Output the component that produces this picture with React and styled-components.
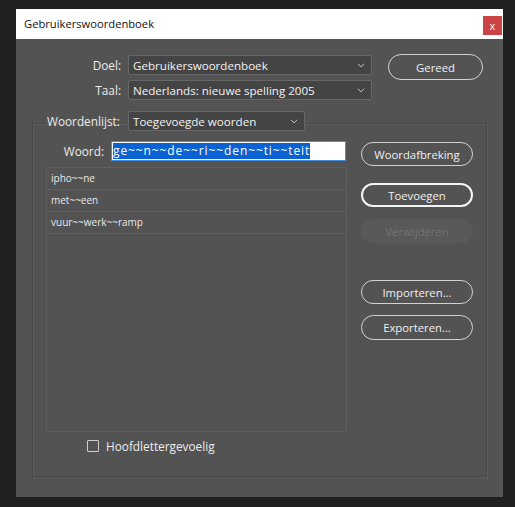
import React from 'react';
import styled, { createGlobalStyle } from 'styled-components';

const GlobalStyle = createGlobalStyle`
  html, body { margin: 0; padding: 0; background: #202020; }
  body { font-family: "Open Sans", "Noto Sans", sans-serif; }
  * { box-sizing: border-box; }
`;

const Page = styled.div`
  width: 515px;
  height: 507px;
  padding: 9px 12px 10px 16px;
`;

const Dialog = styled.div`
  width: 487px;
  height: 488px;
  display: flex;
  flex-direction: column;
  background: #535353;
  box-shadow: inset -3px 0 0 #575757;
`;

const TitleBar = styled.div`
  height: 30px;
  flex: none;
  display: flex;
  align-items: flex-start;
  justify-content: space-between;
  background: #ffffff;
  padding: 0 1px 0 8px;
`;

const Title = styled.span`
  font-size: 11.2px;
  color: #111;
  line-height: 30px;
`;

const CloseButton = styled.button`
  width: 19px;
  height: 19px;
  margin-top: 7px;
  border: none;
  padding: 0;
  background: #cc4346;
  color: #fff;
  font-family: inherit;
  font-size: 11px;
  line-height: 17px;
`;

const Body = styled.div`
  flex: 1;
  display: flex;
  flex-direction: column;
  padding: 0 16px 20px 16px;
`;

const TopSection = styled.div`
  display: flex;
  align-items: flex-start;
  padding-top: 16px;
`;

const FieldGrid = styled.div`
  display: grid;
  grid-template-columns: 89px 244px;
  column-gap: 7px;
  row-gap: 5px;
`;

const Label = styled.label`
  font-size: 11.8px;
  color: #ececec;
  line-height: 20px;
  text-align: ${p => p.$align || 'right'};
  width: ${p => p.$width || 'auto'};
  white-space: nowrap;
  flex: none;
`;

const SelectBox = styled.div`
  height: 20px;
  width: ${p => p.$width || 'auto'};
  display: flex;
  align-items: center;
  justify-content: space-between;
  background: #444444;
  border: 1px solid #676767;
  border-radius: 2px;
  padding: 0 6px 0 4px;
  font-size: 11.6px;
  color: #f2f2f2;
  white-space: nowrap;
`;

const Chevron = () => (
  <svg width="8" height="5" viewBox="0 0 8 5">
    <path d="M0.8 0.8 L4 3.8 L7.2 0.8" fill="none" stroke="#c4c4c4" strokeWidth="1" />
  </svg>
);

const Select = ({ value, width }) => (
  <SelectBox $width={width}>
    <span>{value}</span>
    <Chevron />
  </SelectBox>
);

const PillButton = styled.button`
  width: ${p => p.$width || '112px'};
  height: ${p => p.$height || '24px'};
  margin-top: ${p => p.$mt || '0'};
  margin-left: ${p => p.$ml || '0'};
  border-radius: 13px;
  border: ${p => (p.$default ? '2px solid #f4f4f4' : p.$disabled ? 'none' : '1px solid #d2d2d2')};
  background: ${p => (p.$disabled ? '#595959' : 'transparent')};
  color: ${p => (p.$disabled ? '#737373' : '#f0f0f0')};
  font-family: inherit;
  font-size: 11.3px;
  padding: 0;
  flex: none;
`;

const Group = styled.fieldset`
  flex: 1;
  margin: 11px 0 0 0;
  min-width: 0;
  border: 1px solid #474747;
  box-shadow: inset 1px 1px 0 #5e5e5e, 1px 1px 0 #5e5e5e;
  padding: 6px 13px 0 13px;
  display: flex;
`;

const Legend = styled.legend`
  margin-left: -2px;
  padding: 0 3px 4px 3px;
  display: flex;
  align-items: center;
  gap: 7px;
`;

const GroupContent = styled.div`
  display: flex;
  align-items: flex-start;
  width: 100%;
`;

const LeftColumn = styled.div`
  width: 301px;
  display: flex;
  flex-direction: column;
`;

const WordRow = styled.div`
  display: flex;
  align-items: center;
  gap: 7px;
  height: 20px;
`;

const WordInput = styled.div`
  width: 235px;
  height: 20px;
  background: #ffffff;
  border: 1px solid #4590de;
  padding: 0 1px;
  display: flex;
  align-items: center;
`;

const Selected = styled.span`
  background: #0a62d2;
  color: #ffffff;
  font-size: 12px;
  letter-spacing: 0.9px;
  line-height: 16px;
  white-space: nowrap;
`;

const List = styled.div`
  margin-top: 6px;
  height: 265px;
  border: 1px solid #5f5f5f;
  display: flex;
  flex-direction: column;
`;

const ListRow = styled.div`
  height: 22px;
  border-bottom: 1px solid #5e5e5e;
  padding-left: 4px;
  font-size: 10px;
  color: #e8e8e8;
  line-height: 21px;
`;

const CheckRow = styled.label`
  display: flex;
  align-items: center;
  gap: 7px;
  margin-top: 8px;
  padding-left: 41px;
  font-size: 11.8px;
  color: #ededed;
  height: 12px;
`;

const CheckBox = styled.span`
  width: 12px;
  height: 12px;
  border: 1px solid #cfcfcf;
  border-radius: 1px;
  flex: none;
`;

const RightColumn = styled.div`
  margin-left: 14px;
  padding-top: 1px;
  display: flex;
  flex-direction: column;
`;

const words = ['ipho~~ne', 'met~~een', 'vuur~~werk~~ramp'];

export default function App() {
  return (
    <>
      <GlobalStyle />
      <Page>
        <Dialog>
          <TitleBar>
            <Title>Gebruikerswoordenboek</Title>
            <CloseButton>x</CloseButton>
          </TitleBar>
          <Body>
            <TopSection>
              <FieldGrid>
                <Label>Doel:</Label>
                <Select value="Gebruikerswoordenboek" />
                <Label>Taal:</Label>
                <Select value="Nederlands: nieuwe spelling 2005" />
              </FieldGrid>
              <PillButton $width="95px" $height="26px" $mt="-1px" $ml="16px">
                Gereed
              </PillButton>
            </TopSection>
            <Group>
              <Legend>
                <Label $align="left" $width="74px">Woordenlijst:</Label>
                <Select value="Toegevoegde woorden" width="177px" />
              </Legend>
              <GroupContent>
                <LeftColumn>
                  <WordRow>
                    <Label $width="58px">Woord:</Label>
                    <WordInput>
                      <Selected>ge~~n~~de~~ri~~den~~ti~~teit</Selected>
                    </WordInput>
                  </WordRow>
                  <List>
                    {words.map(w => (
                      <ListRow key={w}>{w}</ListRow>
                    ))}
                  </List>
                  <CheckRow>
                    <CheckBox />
                    Hoofdlettergevoelig
                  </CheckRow>
                </LeftColumn>
                <RightColumn>
                  <PillButton>Woordafbreking</PillButton>
                  <PillButton $default $mt="17px">Toevoegen</PillButton>
                  <PillButton $disabled $mt="12px">Verwijderen</PillButton>
                  <PillButton $mt="37px">Importeren...</PillButton>
                  <PillButton $mt="11px" $height="25px">Exporteren...</PillButton>
                </RightColumn>
              </GroupContent>
            </Group>
          </Body>
        </Dialog>
      </Page>
    </>
  );
}
